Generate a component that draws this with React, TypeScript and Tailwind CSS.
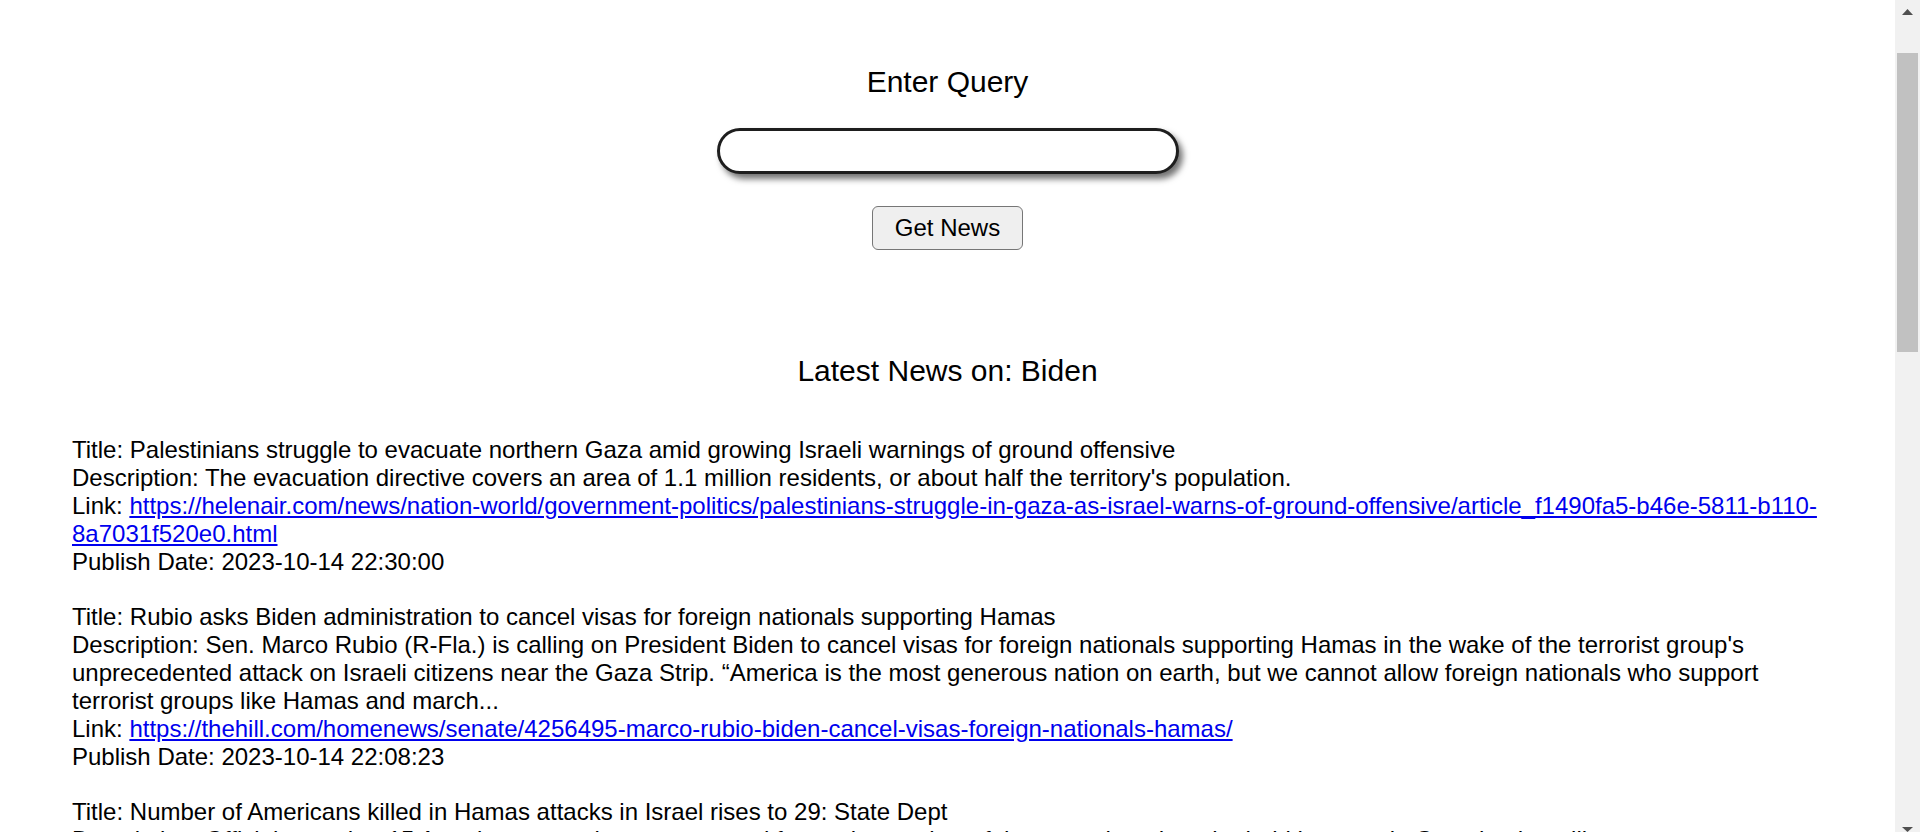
import React from 'react'

interface NewsItem {
  title: string
  description: string
  link: string
  date: string
}

const news: NewsItem[] = [
  {
    title: 'Palestinians struggle to evacuate northern Gaza amid growing Israeli warnings of ground offensive',
    description: "The evacuation directive covers an area of 1.1 million residents, or about half the territory's population.",
    link: 'https://helenair.com/news/nation-world/government-politics/palestinians-struggle-in-gaza-as-israel-warns-of-ground-offensive/article_f1490fa5-b46e-5811-b110-8a7031f520e0.html',
    date: '2023-10-14 22:30:00',
  },
  {
    title: 'Rubio asks Biden administration to cancel visas for foreign nationals supporting Hamas',
    description:
      "Sen. Marco Rubio (R-Fla.) is calling on President Biden to cancel visas for foreign nationals supporting Hamas in the wake of the terrorist group's unprecedented attack on Israeli citizens near the Gaza Strip. \u201cAmerica is the most generous nation on earth, but we cannot allow foreign nationals who support terrorist groups like Hamas and march...",
    link: 'https://thehill.com/homenews/senate/4256495-marco-rubio-biden-cancel-visas-foreign-nationals-hamas/',
    date: '2023-10-14 22:08:23',
  },
  {
    title: 'Number of Americans killed in Hamas attacks in Israel rises to 29: State Dept',
    description:
      'Officials say that 15 Americans are also unaccounted for, and a number of them are thought to be held hostage in Gaza by the militant group.',
    link: 'https://thehill.com/policy/international/4256470-number-of-americans-killed-in-hamas-attacks-in-israel-rises-to-29-state-dept/',
    date: '2023-10-14 21:40:12',
  },
]

function Scrollbar() {
  return (
    <div className="flex h-full w-[25px] shrink-0 flex-col items-center bg-[#f1f1f1]">
      <svg width="11" height="6" viewBox="0 0 11 6" className="mt-[9px]">
        <polygon points="0,6 5.5,0 11,6" fill="#505050" />
      </svg>
      <div className="mt-[38px] h-[299px] w-[21px] bg-[#c1c1c1]" />
      <div className="flex-1" />
      <svg width="11" height="5" viewBox="0 0 11 5">
        <polygon points="0,0 11,0 5.5,5" fill="#505050" />
      </svg>
    </div>
  )
}

export default function App() {
  return (
    <div className="flex h-[832px] w-full overflow-hidden bg-white font-['Liberation_Sans',Arial,sans-serif] text-black">
      <div className="min-w-0 flex-1 overflow-hidden p-[12px]">
        <div className="flex flex-col items-center">
          <label className="mt-[53px] text-[30px] leading-[normal]">Enter Query</label>
          <input
            type="text"
            className="mt-[29px] h-[46px] w-[462px] rounded-full border-[3px] border-[#1e1e1e] bg-white px-4 text-[24px] shadow-[4px_5px_6px_rgba(0,0,0,0.55)] outline-none"
          />
          <button
            type="button"
            className="mt-[32px] h-[44px] rounded-[6px] border border-[#767676] bg-[#efefef] px-[22px] text-[24px] leading-[normal] text-black"
          >
            Get News
          </button>
          <h2 className="mt-[104px] text-[30px] leading-[normal] font-normal">Latest News on: Biden</h2>
        </div>

        <ul className="mt-[48px] flex list-none flex-col gap-[27px] pl-[60px] pr-[50px] text-[24px] leading-[normal]">
          {news.map((item) => (
            <li key={item.link}>
              <div>Title: {item.title}</div>
              <div>Description: {item.description}</div>
              <div>
                Link:{' '}
                <a href={item.link} className="text-[#0000ee] underline">
                  {item.link}
                </a>
              </div>
              <div>Publish Date: {item.date}</div>
            </li>
          ))}
        </ul>
      </div>
      <Scrollbar />
    </div>
  )
}
